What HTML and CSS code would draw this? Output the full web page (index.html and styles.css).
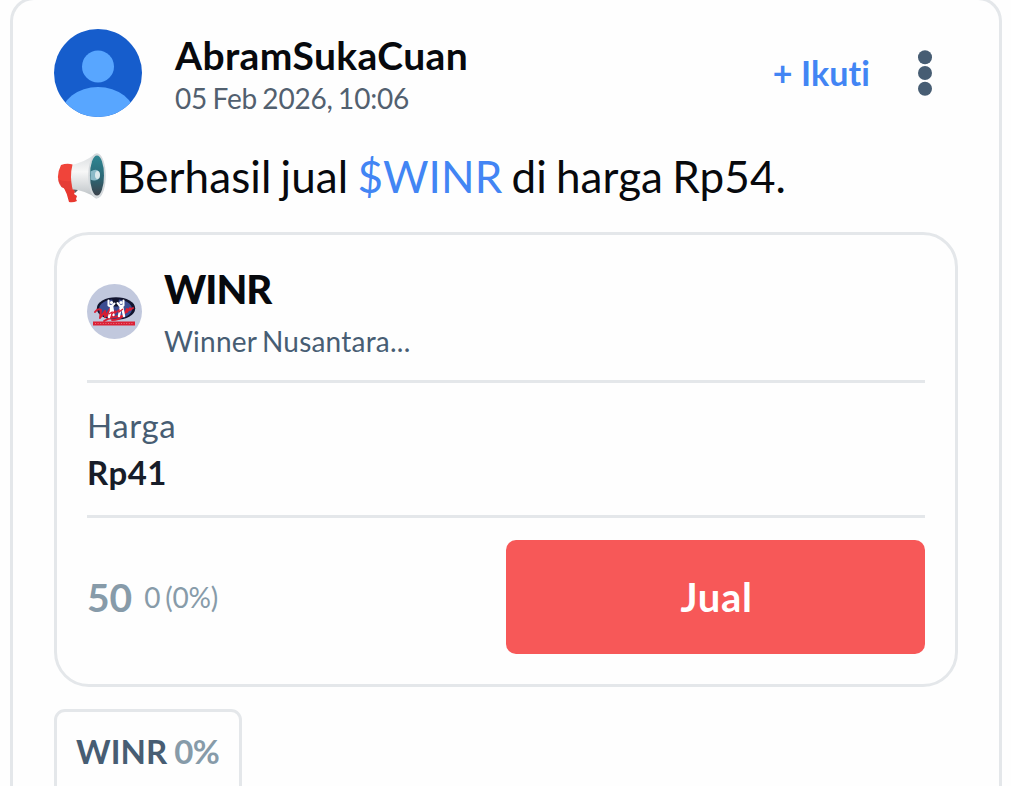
FILE: index.html
```html
<!DOCTYPE html>
<html lang="id">

<head>
    <meta charset="UTF-8">
    <meta name="viewport" content="width=device-width, initial-scale=1.0">
    <title>AbramSukaCuan</title>
    <link rel="stylesheet" href="styles.css">
</head>

<body>
    <article class="post">
        <header class="post-header">
            <svg class="avatar" viewBox="0 0 88 88">
                <clipPath id="avatarClip"><circle cx="44" cy="44" r="44" /></clipPath>
                <g clip-path="url(#avatarClip)">
                    <rect width="88" height="88" fill="#165dcc" />
                    <circle cx="44" cy="37.5" r="16" fill="#58a6ff" />
                    <ellipse cx="44" cy="87" rx="37" ry="29" fill="#58a6ff" />
                </g>
            </svg>
            <div class="author">
                <h2 class="author-name">AbramSukaCuan</h2>
                <p class="post-date">05 Feb 2026, 10:06</p>
            </div>
            <button type="button" class="follow-btn">+ Ikuti</button>
            <button type="button" class="menu-btn" aria-label="Menu">
                <svg width="14" height="46" viewBox="0 0 14 46" fill="#475d73">
                    <circle cx="7" cy="7.3" r="7" />
                    <circle cx="7" cy="23" r="7" />
                    <circle cx="7" cy="38.8" r="7" />
                </svg>
            </button>
        </header>

        <p class="message">
            <svg class="megaphone" viewBox="0 0 52 50">
                <defs>
                    <linearGradient id="horn" x1="0" y1="0" x2="0" y2="1">
                        <stop offset="0" stop-color="#d9dddf" />
                        <stop offset=".4" stop-color="#f7f7f7" />
                        <stop offset="1" stop-color="#b9bfc3" />
                    </linearGradient>
                    <linearGradient id="bell" x1="0" y1="0" x2="0" y2="1">
                        <stop offset="0" stop-color="#2f8793" />
                        <stop offset=".55" stop-color="#2c6775" />
                        <stop offset="1" stop-color="#3c424b" />
                    </linearGradient>
                </defs>
                <path d="M16 33l4-1 2 4-3 3z" fill="#5a6266" />
                <path d="M7 32l10 2 2 4-1 2 3 2-1 3 1 2q-4 2-8 1Q11 39 7 32z" fill="#e8382f" />
                <path d="M14 11Q28 9 39 0q9-2 10.500 21-1 23-9.500 23.500Q30 36 14 35z" fill="url(#horn)" />
                <path d="M5 11q6-2 11.500-.5-3 12 0 25-6 1-11-2.500-7-9-.5-22z" fill="#f0443a" />
                <path d="M2 25q5 3 13 2l1.500 8.500q-6 1-11-2.500-3-3-3.500-8z" fill="#d93631" opacity=".5" />
                <ellipse cx="41" cy="21.800" rx="8.800" ry="22.500" fill="#d5dadd" />
                <ellipse cx="41" cy="21.500" rx="7" ry="20" fill="url(#bell)" />
                <path d="M34.500 17.500q4.500-3 7.500-1 2 4 0 9-4 2-7.500 0z" fill="#8bbac8" />
                <ellipse cx="41.500" cy="21" rx="2.500" ry="4" fill="#dbe9ed" />
            </svg>
            <span>Berhasil jual <a class="ticker">$WINR</a> di harga Rp54.</span>
        </p>

        <section class="stock-card">
            <div class="stock-head">
                <svg class="stock-logo" viewBox="0 0 55 55">
                    <circle cx="27.5" cy="27.5" r="27.5" fill="#c1c8dd" />
                    <ellipse cx="29" cy="24.5" rx="19.2" ry="11.2" fill="#11142e" />
                    <ellipse cx="28.500" cy="25" rx="16.500" ry="9.800" fill="#3c4c91" />
                    <path d="M25 14.500h7l-1 8h-4z" fill="#11142e" />
                    <!-- brush lettering -->
                    <g fill="none" stroke="#d81e33" stroke-linecap="round" stroke-linejoin="round">
                        <path d="M8 28q3-4 6-2l-1 8 5-7v6l5-8M21 32l3-3v3l4-4M38 29l2-4v3l3-4v2l3-2" stroke-width="2" />
                        <path d="M17 37q8-5 19-5-4 4-11 4" stroke-width="1.800" />
                    </g>
                    <!-- two figures -->
                    <g fill="none" stroke="#fff" stroke-width="2" stroke-linecap="round" stroke-linejoin="round">
                        <path d="M21.500 16.500v5l3 1 3-3" />
                        <path d="M30.500 19l3 3.500 3-1v-5" />
                        <path d="M24 22v5l-2 6M25 22l1.500 9M34 22l-2 10M35 22l1 5 1 5" stroke-width="2.400" />
                    </g>
                    <circle cx="24.5" cy="18.5" r="1.600" fill="#fff" />
                    <circle cx="34" cy="18.5" r="1.600" fill="#fff" />
                    <path d="M22 30l3-2v2l3-3v2l4-3v2l4-3" fill="none" stroke="#d81e33" stroke-width="1.200" />
                    <path d="M6 39.500H48" stroke="#dc2035" stroke-width="3.800" />
                    <path d="M8 39.500H47" stroke="#e98595" stroke-width=".8" stroke-dasharray="1 1.600" />
                </svg>
                <div class="stock-title">
                    <h3 class="stock-code">WINR</h3>
                    <p class="stock-name">Winner Nusantara...</p>
                </div>
            </div>
            <div class="price">
                <p class="price-label">Harga</p>
                <p class="price-value">Rp41</p>
            </div>
            <div class="stock-footer">
                <div class="quote">
                    <span class="last">50</span>
                    <span class="change">0 (0%)</span>
                </div>
                <button type="button" class="sell-btn">Jual</button>
            </div>
        </section>

        <div class="chip">
            <span class="chip-code">WINR</span>
            <span class="chip-change">0%</span>
        </div>
    </article>
</body>

</html>
```
FILE: styles.css
```css
* {
    margin: 0;
    padding: 0;
    box-sizing: border-box;
    font-family: 'Lato', sans-serif;
}

body {
    height: 100vh;
    background: #fefefe;
    overflow: hidden;
}

button {
    border: none;
    background: none;
    cursor: pointer;
}

.post {
    width: 992px;
    height: calc(100vh + 3px);
    margin: -3px 0 0 10px;
    padding: 29px 41px 0;
    border: 3px solid #e4e7ea;
    border-bottom: none;
    border-radius: 24px 24px 0 0;
    overflow: hidden;
}

.post-header {
    display: flex;
    height: 88px;
}

.avatar {
    width: 88px;
    height: 88px;
    flex-shrink: 0;
}

.author {
    flex: 1;
    padding: 4px 0 0 33px;
}

.author-name {
    font-size: 39px;
    line-height: 44px;
    letter-spacing: 0.37px;
    color: #07090d;
}

.post-date {
    font-size: 28px;
    line-height: 42px;
    letter-spacing: -0.17px;
    word-spacing: -1.7px;
    color: #52606f;
}

.follow-btn {
    padding-bottom: 2px;
    font-size: 34px;
    font-weight: bold;
    letter-spacing: 0.1px;
    color: #4285f4;
}

.menu-btn {
    display: flex;
    align-items: center;
    margin: 0 26px 0 48px;
}

.message {
    display: flex;
    margin-top: 31px;
    font-size: 44px;
    line-height: 56px;
    letter-spacing: 0.08px;
    word-spacing: -2.2px;
    color: #07090d;
    white-space: nowrap;
}

.megaphone {
    width: 52px;
    height: 50px;
    margin: 6px 9px 0 2px;
    overflow: visible;
}

.ticker {
    color: #4285f4;
}

/* Stock card */
.stock-card {
    width: 904px;
    height: 455px;
    margin-top: 28px;
    padding: 29px 30px;
    border: 3px solid #e4e7ea;
    border-radius: 35px;
}

.stock-head {
    display: flex;
    height: 119px;
    border-bottom: 3px solid #e4e7ea;
}

.stock-logo {
    width: 55px;
    height: 55px;
    margin: 20px 22px 0 0;
}

.stock-code {
    font-size: 40px;
    font-weight: 900;
    line-height: 50px;
    letter-spacing: -1px;
    color: #07090d;
}

.stock-name {
    margin-top: 9px;
    font-size: 28px;
    line-height: 36px;
    letter-spacing: 0.22px;
    word-spacing: -2px;
    color: #475d73;
}

.price {
    height: 135px;
    padding-top: 19px;
    border-bottom: 3px solid #e4e7ea;
}

.price-label {
    font-size: 33px;
    line-height: 46px;
    letter-spacing: 0.6px;
    color: #475d73;
}

.price-value {
    margin-top: 1px;
    font-size: 33px;
    font-weight: bold;
    line-height: 46px;
    letter-spacing: 0.5px;
    color: #171d29;
}

.stock-footer {
    display: flex;
    justify-content: space-between;
    align-items: center;
    margin-top: 22px;
}

.quote {
    display: flex;
    align-items: center;
    gap: 12px;
    color: #879ba9;
}

.last {
    font-size: 39px;
    font-weight: bold;
}

.change {
    font-size: 28px;
    letter-spacing: -0.2px;
    word-spacing: -2px;
}

.sell-btn {
    width: 419px;
    height: 114px;
    padding-left: 2px;
    border-radius: 10px;
    background: #f75858;
    font-size: 40px;
    font-weight: bold;
    letter-spacing: 0.7px;
    color: #fff;
}

/* Tagged stock */
.chip {
    display: inline-flex;
    gap: 7px;
    width: 188px;
    height: 90px;
    margin-top: 22px;
    padding: 18px 0 0 19px;
    border: 3px solid #e4e7ea;
    border-radius: 11px;
    font-size: 33px;
    font-weight: bold;
    line-height: 42px;
    color: #475d73;
}

.chip-change {
    letter-spacing: -0.4px;
    color: #879ba9;
}
```
